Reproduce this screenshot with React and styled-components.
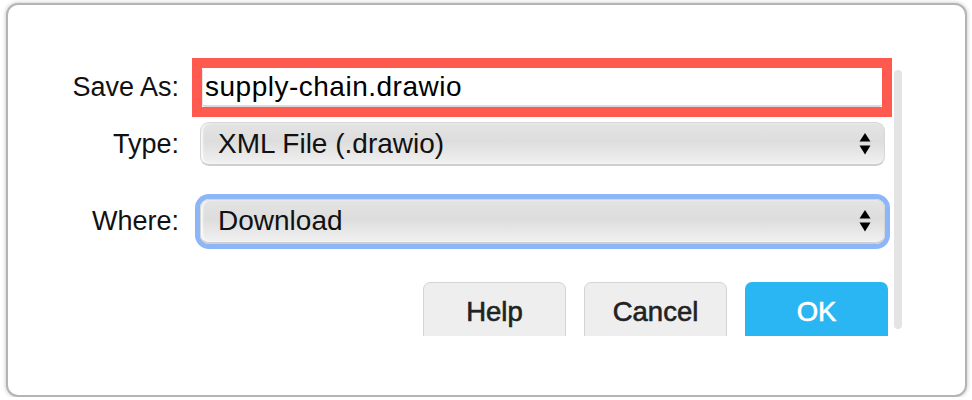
import React, { useState } from "react";
import styled, { createGlobalStyle } from "styled-components";

const Global = createGlobalStyle`
  html, body {
    margin: 0;
    padding: 0;
    background: #ffffff;
  }
  body {
    font-family: "Liberation Sans", Arial, Helvetica, sans-serif;
    color: #111;
  }
`;

export default function App() {
  const [fileName, setFileName] = useState("supply-chain.drawio");

  return (
    <>
      <Global />
      <Dialog>
        <Body>
          <Row>
            <Label>Save As:</Label>
            <Highlight>
              <NameInput
                type="text"
                value={fileName}
                onChange={(e) => setFileName(e.target.value)}
              />
            </Highlight>
          </Row>
          <Row $gap={5}>
            <Label>Type:</Label>
            <Select>
              <span>XML File (.drawio)</span>
              <Arrows />
            </Select>
          </Row>
          <Row $gap={33}>
            <Label>Where:</Label>
            <Select $focused>
              <span>Download</span>
              <Arrows />
            </Select>
          </Row>
          <Buttons>
            <Button>Help</Button>
            <Button>Cancel</Button>
            <Button $primary>OK</Button>
          </Buttons>
          <Thumb />
        </Body>
      </Dialog>
    </>
  );
}

function Arrows() {
  return (
    <ArrowIcon width="12" height="24" viewBox="0 0 12 24">
      <path d="M6 1 L11.5 9.5 L0.5 9.5 Z" fill="#000" />
      <path d="M0.5 13.5 L11.5 13.5 L6 22.5 Z" fill="#000" />
    </ArrowIcon>
  );
}

const Dialog = styled.div`
  box-sizing: border-box;
  margin: 3px 0 0 6px;
  width: 961px;
  height: 394px;
  background: #fff;
  border: 2px solid #b4b4b4;
  border-radius: 12px;
  box-shadow: 0 0 4px rgba(0, 0, 0, 0.25);
`;

const Body = styled.div`
  position: relative;
  height: 331px;
  overflow: hidden;
  padding-top: 53px;
  box-sizing: border-box;
`;

const Row = styled.div`
  display: flex;
  align-items: center;
  gap: 21px;
  margin-top: ${(p) => p.$gap || 0}px;
`;

const Label = styled.label`
  width: 171px;
  flex: none;
  text-align: right;
  font-size: 27px;
  color: #111;
`;

const Highlight = styled.div`
  margin-left: -8px;
  border: 10px solid #ff5a4f;
  display: flex;
`;

const NameInput = styled.input`
  box-sizing: border-box;
  width: 680px;
  height: 39px;
  padding: 0 2px;
  border: none;
  border-bottom: 2px solid #dadada;
  border-left: 1px solid #e4e4e4;
  border-radius: 3px;
  background: #fff;
  outline: none;
  font-family: "Liberation Sans", Arial, sans-serif;
  font-size: 28px;
  letter-spacing: 0.5px;
  color: #000;
`;

const Select = styled.div`
  box-sizing: border-box;
  width: 685px;
  height: ${(p) => (p.$focused ? 45 : 44)}px;
  display: flex;
  align-items: center;
  justify-content: space-between;
  padding: 0 13px 0 17px;
  border: 1px solid #d6d6d6;
  border-bottom: 2px solid #cfcfcf;
  border-radius: 9px;
  background: linear-gradient(
    #e4e4e4 0%,
    #dddddd 45%,
    #e6e6e6 70%,
    #f1f1f1 100%
  );
  box-shadow: ${(p) =>
    p.$focused
      ? "inset 2px 0 2px rgba(255,255,255,0.8), 0 0 0 5px #8db6f8"
      : "inset 2px 0 2px rgba(255,255,255,0.8)"};
  font-size: 28px;
  color: #111;
`;

const ArrowIcon = styled.svg`
  display: block;
  flex: none;
`;

const Buttons = styled.div`
  display: flex;
  justify-content: flex-end;
  gap: 18px;
  width: 880px;
  margin-top: 38px;
`;

const Button = styled.button`
  box-sizing: border-box;
  width: 143px;
  height: 68px;
  flex: none;
  display: flex;
  align-items: center;
  justify-content: center;
  padding: 0 0 8px;
  border-radius: 7px;
  border: ${(p) => (p.$primary ? "none" : "1.5px solid #d4d4d4")};
  background: ${(p) => (p.$primary ? "#29b6f2" : "#eeeeee")};
  color: ${(p) => (p.$primary ? "#fff" : "#222")};
  font-family: "Liberation Sans", Arial, sans-serif;
  font-weight: 400;
  font-size: 27.5px;
  -webkit-text-stroke: 0.6px currentColor;
  cursor: pointer;
`;

const Thumb = styled.div`
  position: absolute;
  left: 886px;
  top: 65px;
  width: 8px;
  height: 259px;
  border-radius: 4px;
  background: #e4e4e4;
`;
